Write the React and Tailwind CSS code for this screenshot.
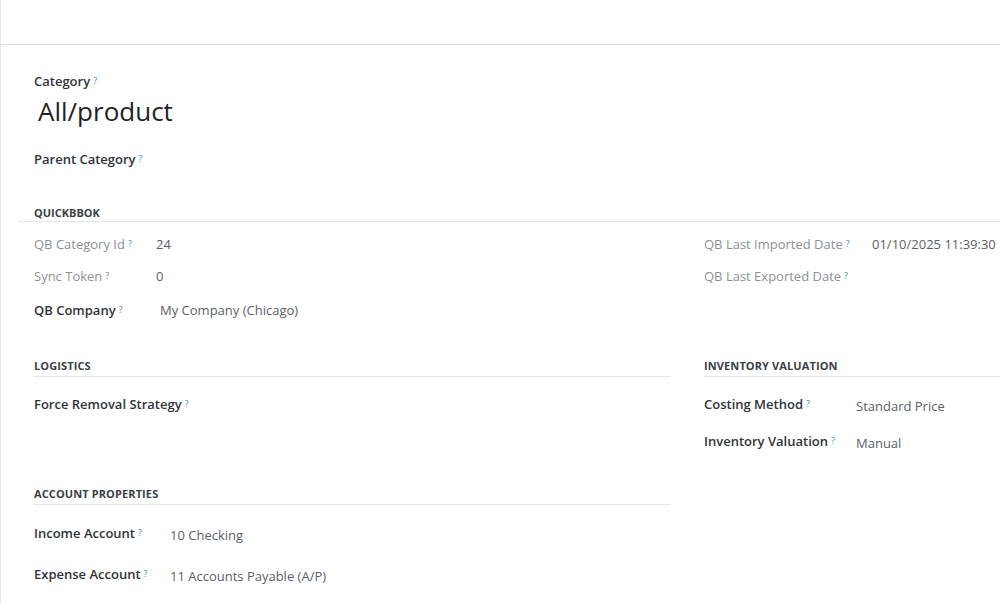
import React from "react";

const Help = () => (
  <sup className="ml-[3px] text-[9px] font-normal text-[#3f8fa3] relative -top-[2px]">?</sup>
);

const Field = ({ label, value, labelW, muted, h = "h-[32px]", valueDy = "" }) => (
  <div className={`flex items-center ${h}`}>
    <div
      className={`${labelW} shrink-0 ${
        muted ? "text-[#8d9196] font-normal" : "text-[#2f343a] font-semibold"
      }`}
    >
      {label}
      <Help />
    </div>
    <div className={`text-[#5b6168] ${valueDy}`}>{value}</div>
  </div>
);

const Section = ({ title, children, className = "" }) => (
  <div className={className}>
    <div className="h-[26px] flex items-end pb-[2px] border-b border-[#e4e6e8] text-[11px] font-bold uppercase text-[#3a3f45] tracking-[0.01em]">
      {title}
    </div>
    {children}
  </div>
);

export default function App() {
  return (
    <div
      className="w-[1000px] h-[604px] overflow-hidden bg-white text-[13px]"
      style={{ fontFamily: '"Open Sans", "Noto Sans", sans-serif' }}
    >
      <div className="h-[45px] border-b border-[#dcdfe2] border-l border-l-[#e4e6e8]" />
      <div className="border-l border-[#e4e6e8] h-[559px] w-[1400px]">
        {/* Header */}
        <div className="pl-[33px] pt-[26px]">
          <div className="text-[#2f343a] font-semibold leading-[20px]">
            Category
            <Help />
          </div>
          <div className="mt-[2px] pl-[4px] text-[26px] leading-[36px] text-[#1f2328]">All/product</div>
          <div className="mt-[20px] text-[#2f343a] font-semibold leading-[20px]">
            Parent Category
            <Help />
          </div>
        </div>

        {/* Quickbook */}
        <div className="mt-[32px] pl-[17px]">
          <div className="h-[21px] pl-[16px] flex items-end border-b border-[#e4e6e8] text-[11px] font-bold uppercase text-[#3a3f45]">
            Quickbbok
          </div>
          <div className="pl-[16px] pt-[7px] flex gap-[34px]">
            <div className="w-[636px]">
              <Field label="QB Category Id" value="24" labelW="w-[122px]" muted />
              <Field label="Sync Token" value="0" labelW="w-[122px]" muted />
              <Field label="QB Company" value="My Company (Chicago)" labelW="w-[126px]" h="h-[36px]" />
            </div>
            <div className="w-[640px]">
              <Field label="QB Last Imported Date" value="01/10/2025 11:39:30" labelW="w-[168px]" muted />
              <Field label="QB Last Exported Date" value="" labelW="w-[168px]" muted />
            </div>
          </div>
        </div>

        {/* Logistics / Inventory valuation */}
        <div className="pl-[33px] mt-[22px] flex gap-[34px]">
          <div className="w-[636px]">
            <Section title="Logistics">
              <div className="pt-[12px]">
                <Field label="Force Removal Strategy" value="" labelW="w-[180px]" />
              </div>
            </Section>
            <Section title="Account Properties" className="mt-[58px]">
              <div className="pt-[13px]">
                <Field label="Income Account" value="10 Checking" labelW="w-[136px]" valueDy="mt-[3px]" />
                <div className="h-[9px]" />
                <Field label="Expense Account" value="11 Accounts Payable (A/P)" labelW="w-[136px]" valueDy="mt-[3px]" />
              </div>
            </Section>
          </div>
          <div className="w-[640px]">
            <Section title="Inventory Valuation">
              <div className="pt-[12px]">
                <Field label="Costing Method" value="Standard Price" labelW="w-[152px]" valueDy="mt-[4px]" />
                <div className="h-[5px]" />
                <Field label="Inventory Valuation" value="Manual" labelW="w-[152px]" valueDy="mt-[3px]" />
              </div>
            </Section>
          </div>
        </div>
      </div>
    </div>
  );
}
